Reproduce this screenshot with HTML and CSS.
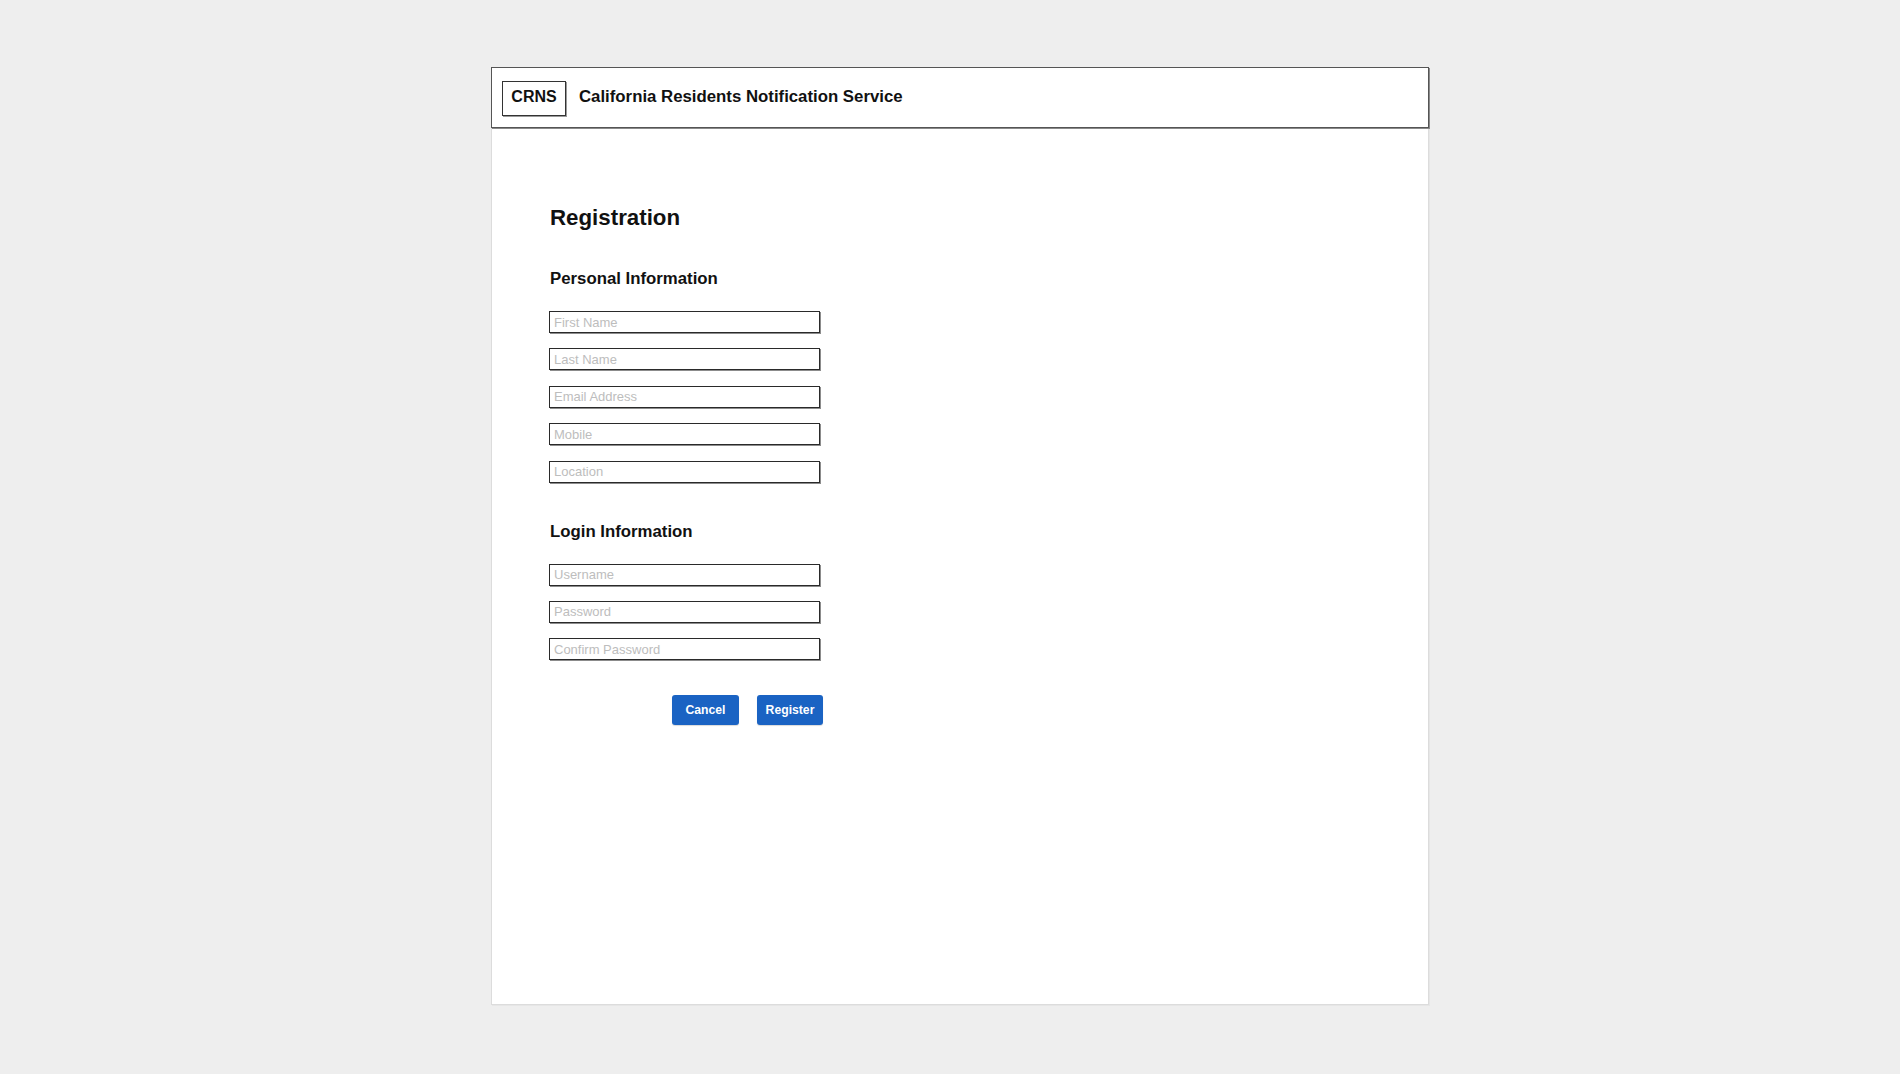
FILE: index.html
```html
<!DOCTYPE html>
<html lang="en">
<head>
<meta charset="utf-8">
<title>CRNS - Registration</title>
<link rel="stylesheet" href="styles.css">
</head>
<body>
  <div class="card">
    <header class="topbar">
      <div class="logo">CRNS</div>
      <div class="site-title">California Residents Notification Service</div>
    </header>
    <main class="content">
      <h1 class="page-title">Registration</h1>
      <h2 class="section-title section-personal">Personal Information</h2>
      <div class="fields">
        <input class="field" type="text" placeholder="First Name">
        <input class="field" type="text" placeholder="Last Name">
        <input class="field" type="text" placeholder="Email Address">
        <input class="field" type="text" placeholder="Mobile">
        <input class="field" type="text" placeholder="Location">
      </div>
      <h2 class="section-title section-login">Login Information</h2>
      <div class="fields">
        <input class="field" type="text" placeholder="Username">
        <input class="field" type="text" placeholder="Password">
        <input class="field" type="text" placeholder="Confirm Password">
      </div>
      <div class="actions">
        <button class="btn btn-cancel" type="button">Cancel</button>
        <button class="btn btn-register" type="button">Register</button>
      </div>
    </main>
  </div>
</body>
</html>
```
FILE: styles.css
```css
html, body {
  margin: 0;
  padding: 0;
}
body {
  background: #eeeeee;
  font-family: "Liberation Sans", Arial, sans-serif;
  color: #111;
  padding: 67px 0 0 491px;
  min-height: 1074px;
  box-sizing: border-box;
}
.card {
  width: 938px;
  height: 938px;
  box-sizing: border-box;
  background: #fff;
  border: 1px solid #dcdcdc;
  box-shadow: 1px 1px 0 #e6e6e6;
  display: flex;
  flex-direction: column;
}
.topbar {
  margin: -1px -1px 0 -1px;
  height: 61px;
  box-sizing: border-box;
  border: 1px solid #555;
  box-shadow: 1px 1px 0 #8a8a8a;
  background: #fff;
  display: flex;
  align-items: flex-start;
  padding: 13px 0 0 10px;
}
.logo {
  width: 64px;
  height: 35px;
  box-sizing: border-box;
  border: 1px solid #333;
  box-shadow: 1px 1px 0 #9a9a9a;
  font-weight: bold;
  font-size: 16px;
  line-height: 30px;
  text-align: center;
  color: #111;
}
.site-title {
  margin-left: 13px;
  font-weight: bold;
  font-size: 16.8px;
  line-height: 32px;
  color: #111;
}
.content {
  padding: 0 0 0 57px;
  display: flex;
  flex-direction: column;
  align-items: flex-start;
}
.page-title {
  margin: 79px 0 0 1px;
  font-size: 22.3px;
  line-height: 22px;
  font-weight: bold;
}
.section-title {
  font-size: 16.8px;
  line-height: 17px;
  font-weight: bold;
  margin: 0 0 0 1px;
}
.section-personal {
  margin-top: 41px;
}
.section-login {
  margin-top: 40px;
}
.fields {
  display: flex;
  flex-direction: column;
  gap: 15.4px;
  margin-top: 24px;
}
.section-login + .fields {
  margin-top: 24px;
}
.field {
  width: 271px;
  height: 22px;
  box-sizing: border-box;
  margin: 0;
  border: 1px solid #2a2a2a;
  box-shadow: 1px 1px 0 #8c8c8c;
  padding: 0 4px;
  font-family: "Liberation Sans", Arial, sans-serif;
  font-size: 13px;
  color: #333;
  background: #fff;
  outline: none;
  border-radius: 0;
}
.field::placeholder {
  color: #bdbdbd;
}
.actions {
  display: flex;
  gap: 18px;
  margin: 35px 0 0 123px;
}
.btn {
  height: 30px;
  box-sizing: border-box;
  border: none;
  border-radius: 3px;
  background: #1a63c3;
  color: #fff;
  font-family: "Liberation Sans", Arial, sans-serif;
  font-weight: bold;
  font-size: 12.2px;
  padding: 0;
  box-shadow: 0 1px 1px rgba(0,0,0,0.15);
}
.btn-cancel {
  width: 67px;
}
.btn-register {
  width: 66px;
}
```
